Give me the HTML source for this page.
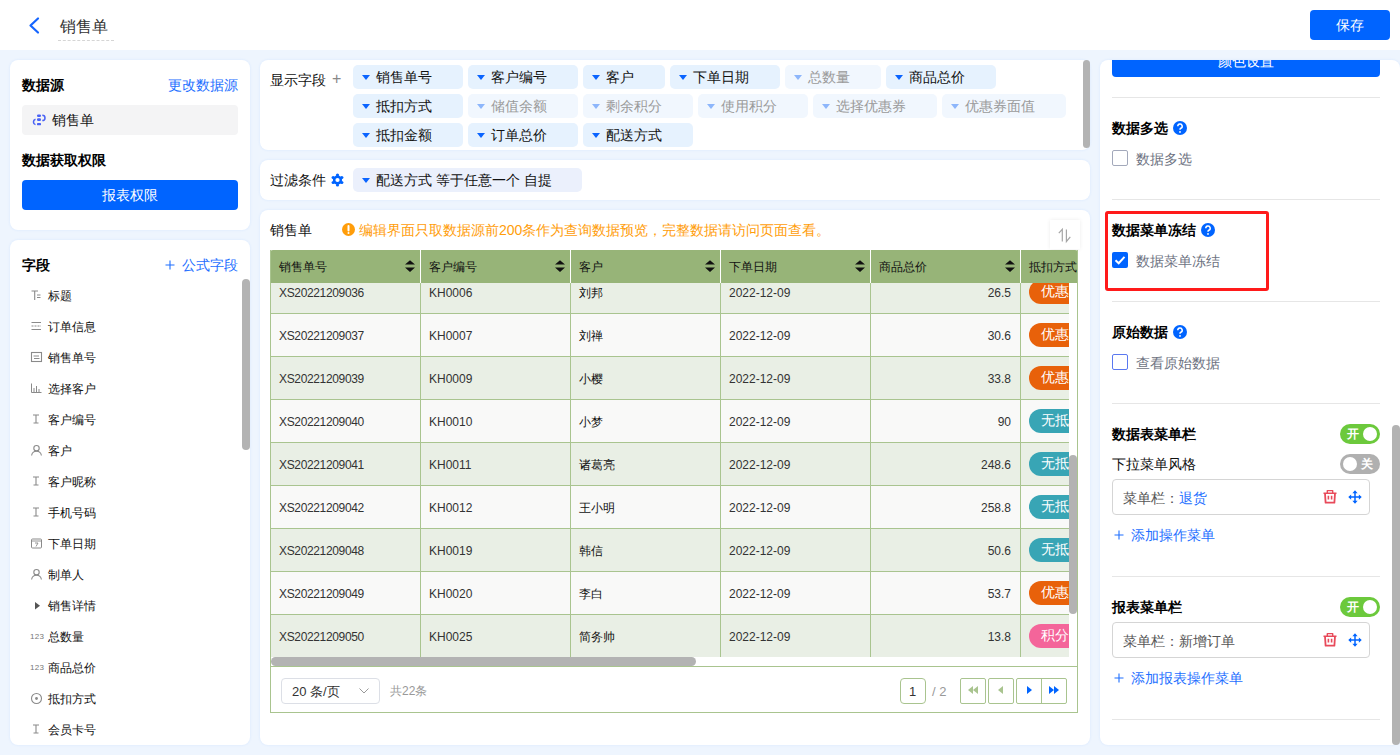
<!DOCTYPE html>
<html><head><meta charset="utf-8"><style>
*{box-sizing:border-box;margin:0;padding:0}
html,body{width:1400px;height:755px;overflow:hidden}
body{position:relative;background:#EEF5FE;font-family:"Liberation Sans",sans-serif;color:#333}
.a{position:absolute}
.t{position:absolute;white-space:nowrap;line-height:1}
.panel{position:absolute;background:#fff;border-radius:8px;overflow:hidden;box-shadow:0 0 3px rgba(30,120,255,0.10)}
svg{position:absolute;overflow:visible}
</style></head><body>
<div class="a" style="left:0px;top:0px;width:1400px;height:50px;background:#fff"></div>
<svg style="left:27px;top:16px" width="14" height="19" viewBox="0 0 14 19"><path d="M11 2.5 L3.5 9.5 L11 16.5" fill="none" stroke="#1565FF" stroke-width="2.2" stroke-linecap="round" stroke-linejoin="round"/></svg>
<div class="t" style="left:60px;top:19px;font-size:16px;color:#333;">销售单</div>
<div class="a" style="left:58px;top:40px;width:56px;height:0px;border-top:1px dashed #D5D5D5"></div>
<div class="a" style="left:1310px;top:10px;width:80px;height:30px;background:#0064FF;border-radius:4px"></div>
<div class="t" style="left:1336px;top:18px;font-size:14px;color:#fff;">保存</div>
<div class="panel" style="left:10px;top:60px;width:240px;height:170px"></div>
<div class="t" style="left:22px;top:78px;font-size:14px;color:#000;font-weight:bold">数据源</div>
<div class="t" style="left:168px;top:78px;font-size:14px;color:#1E6FFF;">更改数据源</div>
<div class="a" style="left:22px;top:105px;width:216px;height:30px;background:#F4F4F5;border-radius:4px"></div>
<svg style="left:28px;top:108px" width="24" height="24" viewBox="0 0 24 24"><g fill="#4A63F5"><rect x="9" y="6.4" width="4" height="2.6" rx="1.2"/><rect x="9" y="10.3" width="4" height="2.6" rx="1.2"/><rect x="9" y="15" width="4" height="2.2" rx="0.4"/></g><path d="M14.3 7.2 A2.7 2.7 0 0 1 14.3 12.6" fill="none" stroke="#4A63F5" stroke-width="1.5"/><path d="M7.5 11.2 A2.8 2.8 0 0 0 7.5 16.6" fill="none" stroke="#4A63F5" stroke-width="1.5"/></svg>
<div class="t" style="left:52px;top:113px;font-size:14px;color:#111;">销售单</div>
<div class="t" style="left:22px;top:153px;font-size:14px;color:#000;font-weight:bold">数据获取权限</div>
<div class="a" style="left:22px;top:180px;width:216px;height:30px;background:#0064FF;border-radius:4px"></div>
<div class="t" style="left:102px;top:188px;font-size:14px;color:#fff;">报表权限</div>
<div class="panel" style="left:10px;top:240px;width:240px;height:505px"></div>
<div class="t" style="left:22px;top:258px;font-size:14px;color:#000;font-weight:bold">字段</div>
<svg style="left:165px;top:260px" width="10" height="10" viewBox="0 0 10 10"><path d="M5 0.5 V9.5 M0.5 5 H9.5" stroke="#1E6FFF" stroke-width="1.1"/></svg>
<div class="t" style="left:182px;top:258px;font-size:14px;color:#1E6FFF;">公式字段</div>
<div class="t" style="left:48px;top:290px;font-size:12px;color:#111;">标题</div>
<svg style="left:31px;top:290px" width="11" height="11" viewBox="0 0 11 11"><path d="M0.5 1 H7 M3.7 1 V10" stroke="#8A8A8A" stroke-width="1.1" fill="none"/><path d="M6 5 H9.5 M6 7.5 H9.5" stroke="#8A8A8A" stroke-width="1" fill="none"/></svg>
<div class="t" style="left:48px;top:321px;font-size:12px;color:#111;">订单信息</div>
<svg style="left:31px;top:321px" width="11" height="11" viewBox="0 0 11 11"><path d="M0.5 1.5 H10 M0.5 8.5 H10" stroke="#8A8A8A" stroke-width="1.1" fill="none"/><path d="M0.5 5 H10" stroke="#8A8A8A" stroke-width="1" stroke-dasharray="2 1" fill="none"/></svg>
<div class="t" style="left:48px;top:352px;font-size:12px;color:#111;">销售单号</div>
<svg style="left:31px;top:352px" width="11" height="11" viewBox="0 0 11 11"><rect x="0.5" y="0.5" width="10" height="9" stroke="#8A8A8A" stroke-width="1.1" fill="none"/><path d="M2.5 4 H8 M3 6.5 H8.5" stroke="#8A8A8A" stroke-width="1" fill="none"/></svg>
<div class="t" style="left:48px;top:383px;font-size:12px;color:#111;">选择客户</div>
<svg style="left:31px;top:383px" width="11" height="11" viewBox="0 0 11 11"><path d="M0.5 0.5 V9.5 H10.5 M3 9 V5 M5.5 9 V3 M8 9 V6" stroke="#8A8A8A" stroke-width="1" fill="none"/></svg>
<div class="t" style="left:48px;top:414px;font-size:12px;color:#111;">客户编号</div>
<svg style="left:32px;top:414px" width="8" height="10" viewBox="0 0 8 10"><path d="M1 1 H7 M4 1 V9 M1.5 9 H6.5" stroke="#8A8A8A" stroke-width="1.1" fill="none"/></svg>
<div class="t" style="left:48px;top:445px;font-size:12px;color:#111;">客户</div>
<svg style="left:31px;top:445px" width="11" height="11" viewBox="0 0 11 11"><circle cx="5.5" cy="3.2" r="2.7" stroke="#8A8A8A" stroke-width="1.1" fill="none"/><path d="M0.6 10.5 C1 7.5 3 6.3 5.5 6.3 C8 6.3 10 7.5 10.4 10.5" stroke="#8A8A8A" stroke-width="1.1" fill="none"/></svg>
<div class="t" style="left:48px;top:476px;font-size:12px;color:#111;">客户昵称</div>
<svg style="left:32px;top:476px" width="8" height="10" viewBox="0 0 8 10"><path d="M1 1 H7 M4 1 V9 M1.5 9 H6.5" stroke="#8A8A8A" stroke-width="1.1" fill="none"/></svg>
<div class="t" style="left:48px;top:507px;font-size:12px;color:#111;">手机号码</div>
<svg style="left:32px;top:507px" width="8" height="10" viewBox="0 0 8 10"><path d="M1 1 H7 M4 1 V9 M1.5 9 H6.5" stroke="#8A8A8A" stroke-width="1.1" fill="none"/></svg>
<div class="t" style="left:48px;top:538px;font-size:12px;color:#111;">下单日期</div>
<svg style="left:31px;top:538px" width="11" height="11" viewBox="0 0 11 11"><rect x="0.5" y="1" width="10" height="9" rx="1" stroke="#8A8A8A" stroke-width="1" fill="none"/><path d="M0.5 3 H10.5 M4 5 H7 L5 8.5" stroke="#8A8A8A" stroke-width="0.9" fill="none"/></svg>
<div class="t" style="left:48px;top:569px;font-size:12px;color:#111;">制单人</div>
<svg style="left:31px;top:569px" width="11" height="11" viewBox="0 0 11 11"><circle cx="5.5" cy="3.2" r="2.7" stroke="#8A8A8A" stroke-width="1.1" fill="none"/><path d="M0.6 10.5 C1 7.5 3 6.3 5.5 6.3 C8 6.3 10 7.5 10.4 10.5" stroke="#8A8A8A" stroke-width="1.1" fill="none"/></svg>
<div class="t" style="left:48px;top:600px;font-size:12px;color:#111;">销售详情</div>
<svg style="left:35px;top:602px" width="5" height="8" viewBox="0 0 5 8"><path d="M0 0 L5 3.8 L0 7.6 Z" fill="#555"/></svg>
<div class="t" style="left:48px;top:631px;font-size:12px;color:#111;">总数量</div>
<div class="t" style="left:30px;top:633px;font-size:8px;color:#777;letter-spacing:0.3px">123</div>
<div class="t" style="left:48px;top:662px;font-size:12px;color:#111;">商品总价</div>
<div class="t" style="left:30px;top:664px;font-size:8px;color:#777;letter-spacing:0.3px">123</div>
<div class="t" style="left:48px;top:693px;font-size:12px;color:#111;">抵扣方式</div>
<svg style="left:31px;top:693px" width="11" height="11" viewBox="0 0 11 11"><circle cx="5.5" cy="5.5" r="5" stroke="#8A8A8A" stroke-width="1.1" fill="none"/><circle cx="5.5" cy="5.5" r="1.4" fill="#8A8A8A"/></svg>
<div class="t" style="left:48px;top:724px;font-size:12px;color:#111;">会员卡号</div>
<svg style="left:32px;top:724px" width="8" height="10" viewBox="0 0 8 10"><path d="M1 1 H7 M4 1 V9 M1.5 9 H6.5" stroke="#8A8A8A" stroke-width="1.1" fill="none"/></svg>
<div class="a" style="left:242px;top:279px;width:8px;height:171px;background:#B3B3B3;border-radius:4px"></div>
<div class="panel" style="left:260px;top:60px;width:830px;height:90px"></div>
<div class="t" style="left:270px;top:73px;font-size:14px;color:#111;">显示字段</div>
<div class="t" style="left:332px;top:71px;font-size:16px;color:#888;">+</div>
<div class="a" style="left:353px;top:65px;width:110px;height:24px;background:#E6F2FE;border-radius:5px"></div>
<svg style="left:362px;top:75px" width="8" height="5" viewBox="0 0 8 5"><path d="M0 0 H8 L4 5 Z" fill="#0A64FF"/></svg>
<div class="t" style="left:376px;top:70px;font-size:14px;color:#111;">销售单号</div>
<div class="a" style="left:468px;top:65px;width:110px;height:24px;background:#E6F2FE;border-radius:5px"></div>
<svg style="left:477px;top:75px" width="8" height="5" viewBox="0 0 8 5"><path d="M0 0 H8 L4 5 Z" fill="#0A64FF"/></svg>
<div class="t" style="left:491px;top:70px;font-size:14px;color:#111;">客户编号</div>
<div class="a" style="left:583px;top:65px;width:82px;height:24px;background:#E6F2FE;border-radius:5px"></div>
<svg style="left:592px;top:75px" width="8" height="5" viewBox="0 0 8 5"><path d="M0 0 H8 L4 5 Z" fill="#0A64FF"/></svg>
<div class="t" style="left:606px;top:70px;font-size:14px;color:#111;">客户</div>
<div class="a" style="left:670px;top:65px;width:110px;height:24px;background:#E6F2FE;border-radius:5px"></div>
<svg style="left:679px;top:75px" width="8" height="5" viewBox="0 0 8 5"><path d="M0 0 H8 L4 5 Z" fill="#0A64FF"/></svg>
<div class="t" style="left:693px;top:70px;font-size:14px;color:#111;">下单日期</div>
<div class="a" style="left:785px;top:65px;width:96px;height:24px;background:#F1F7FE;border-radius:5px"></div>
<svg style="left:794px;top:75px" width="8" height="5" viewBox="0 0 8 5"><path d="M0 0 H8 L4 5 Z" fill="#8DB6FB"/></svg>
<div class="t" style="left:808px;top:70px;font-size:14px;color:#9A9A9A;">总数量</div>
<div class="a" style="left:886px;top:65px;width:110px;height:24px;background:#E6F2FE;border-radius:5px"></div>
<svg style="left:895px;top:75px" width="8" height="5" viewBox="0 0 8 5"><path d="M0 0 H8 L4 5 Z" fill="#0A64FF"/></svg>
<div class="t" style="left:909px;top:70px;font-size:14px;color:#111;">商品总价</div>
<div class="a" style="left:353px;top:94px;width:110px;height:24px;background:#E6F2FE;border-radius:5px"></div>
<svg style="left:362px;top:104px" width="8" height="5" viewBox="0 0 8 5"><path d="M0 0 H8 L4 5 Z" fill="#0A64FF"/></svg>
<div class="t" style="left:376px;top:99px;font-size:14px;color:#111;">抵扣方式</div>
<div class="a" style="left:468px;top:94px;width:110px;height:24px;background:#F1F7FE;border-radius:5px"></div>
<svg style="left:477px;top:104px" width="8" height="5" viewBox="0 0 8 5"><path d="M0 0 H8 L4 5 Z" fill="#8DB6FB"/></svg>
<div class="t" style="left:491px;top:99px;font-size:14px;color:#9A9A9A;">储值余额</div>
<div class="a" style="left:583px;top:94px;width:110px;height:24px;background:#F1F7FE;border-radius:5px"></div>
<svg style="left:592px;top:104px" width="8" height="5" viewBox="0 0 8 5"><path d="M0 0 H8 L4 5 Z" fill="#8DB6FB"/></svg>
<div class="t" style="left:606px;top:99px;font-size:14px;color:#9A9A9A;">剩余积分</div>
<div class="a" style="left:698px;top:94px;width:110px;height:24px;background:#F1F7FE;border-radius:5px"></div>
<svg style="left:707px;top:104px" width="8" height="5" viewBox="0 0 8 5"><path d="M0 0 H8 L4 5 Z" fill="#8DB6FB"/></svg>
<div class="t" style="left:721px;top:99px;font-size:14px;color:#9A9A9A;">使用积分</div>
<div class="a" style="left:813px;top:94px;width:124px;height:24px;background:#F1F7FE;border-radius:5px"></div>
<svg style="left:822px;top:104px" width="8" height="5" viewBox="0 0 8 5"><path d="M0 0 H8 L4 5 Z" fill="#8DB6FB"/></svg>
<div class="t" style="left:836px;top:99px;font-size:14px;color:#9A9A9A;">选择优惠券</div>
<div class="a" style="left:942px;top:94px;width:124px;height:24px;background:#F1F7FE;border-radius:5px"></div>
<svg style="left:951px;top:104px" width="8" height="5" viewBox="0 0 8 5"><path d="M0 0 H8 L4 5 Z" fill="#8DB6FB"/></svg>
<div class="t" style="left:965px;top:99px;font-size:14px;color:#9A9A9A;">优惠券面值</div>
<div class="a" style="left:353px;top:123px;width:110px;height:24px;background:#E6F2FE;border-radius:5px"></div>
<svg style="left:362px;top:133px" width="8" height="5" viewBox="0 0 8 5"><path d="M0 0 H8 L4 5 Z" fill="#0A64FF"/></svg>
<div class="t" style="left:376px;top:128px;font-size:14px;color:#111;">抵扣金额</div>
<div class="a" style="left:468px;top:123px;width:110px;height:24px;background:#E6F2FE;border-radius:5px"></div>
<svg style="left:477px;top:133px" width="8" height="5" viewBox="0 0 8 5"><path d="M0 0 H8 L4 5 Z" fill="#0A64FF"/></svg>
<div class="t" style="left:491px;top:128px;font-size:14px;color:#111;">订单总价</div>
<div class="a" style="left:583px;top:123px;width:110px;height:24px;background:#E6F2FE;border-radius:5px"></div>
<svg style="left:592px;top:133px" width="8" height="5" viewBox="0 0 8 5"><path d="M0 0 H8 L4 5 Z" fill="#0A64FF"/></svg>
<div class="t" style="left:606px;top:128px;font-size:14px;color:#111;">配送方式</div>
<div class="a" style="left:1083px;top:60px;width:7px;height:88px;background:#B3B3B3;border-radius:4px"></div>
<div class="panel" style="left:260px;top:160px;width:830px;height:40px"></div>
<div class="t" style="left:270px;top:173px;font-size:14px;color:#111;">过滤条件</div>
<svg style="left:331px;top:174px" width="13" height="12" viewBox="0 0 13 12"><g transform="translate(6.5 6)" fill="#0064FF"><circle r="4.6"/><circle cx="4.33" cy="2.50" r="1.6"/><circle cx="-0.00" cy="5.00" r="1.6"/><circle cx="-4.33" cy="2.50" r="1.6"/><circle cx="-4.33" cy="-2.50" r="1.6"/><circle cx="0.00" cy="-5.00" r="1.6"/><circle cx="4.33" cy="-2.50" r="1.6"/><circle r="2.1" fill="#fff"/></g></svg>
<div class="a" style="left:353px;top:168px;width:229px;height:24px;background:#EBF0FC;border-radius:5px"></div>
<svg style="left:362px;top:178px" width="8" height="5" viewBox="0 0 8 5"><path d="M0 0 H8 L4 5 Z" fill="#0A64FF"/></svg>
<div class="t" style="left:376px;top:173px;font-size:14px;color:#111;">配送方式 等于任意一个 自提</div>
<div class="panel" style="left:260px;top:210px;width:830px;height:535px"></div>
<div class="t" style="left:270px;top:223px;font-size:14px;color:#111;">销售单</div>
<svg style="left:342px;top:223px" width="13" height="13" viewBox="0 0 13 13"><circle cx="6.5" cy="6.5" r="6.5" fill="#FF9D0A"/><path d="M6.5 3 V7.5" stroke="#fff" stroke-width="2" stroke-linecap="round"/><circle cx="6.5" cy="10" r="1" fill="#fff"/></svg>
<div class="t" style="left:359px;top:223px;font-size:14px;color:#FF9D0A;">编辑界面只取数据源前200条作为查询数据预览，完整数据请访问页面查看。</div>
<div class="a" style="left:1050px;top:220px;width:30px;height:29px;background:#fff;box-shadow:0 0 4px rgba(0,0,0,0.08)"></div>
<svg style="left:1057px;top:228px" width="16" height="15" viewBox="0 0 16 15"><path d="M1.8 5.2 L5.3 1.4 V13.5" fill="none" stroke="#A6A6A6" stroke-width="1.2"/><path d="M9.4 1.4 V13.5 L13.3 8.8" fill="none" stroke="#A6A6A6" stroke-width="1.2"/></svg>
<div class="a" style="left:270px;top:250px;width:808px;height:33px;background:#97B478;border-radius:3px 3px 0 0"></div>
<div class="t" style="left:279px;top:261px;font-size:12px;color:#111;">销售单号</div>
<svg style="left:405px;top:260px" width="10" height="12" viewBox="0 0 10 12"><path d="M0 4.6 L5 0.2 L10 4.6 Z M0 7.6 L5 12 L10 7.6 Z" fill="#111"/></svg>
<div class="t" style="left:429px;top:261px;font-size:12px;color:#111;">客户编号</div>
<div class="a" style="left:420px;top:250px;width:1px;height:33px;background:#fff"></div>
<svg style="left:555px;top:260px" width="10" height="12" viewBox="0 0 10 12"><path d="M0 4.6 L5 0.2 L10 4.6 Z M0 7.6 L5 12 L10 7.6 Z" fill="#111"/></svg>
<div class="t" style="left:579px;top:261px;font-size:12px;color:#111;">客户</div>
<div class="a" style="left:570px;top:250px;width:1px;height:33px;background:#fff"></div>
<svg style="left:705px;top:260px" width="10" height="12" viewBox="0 0 10 12"><path d="M0 4.6 L5 0.2 L10 4.6 Z M0 7.6 L5 12 L10 7.6 Z" fill="#111"/></svg>
<div class="t" style="left:729px;top:261px;font-size:12px;color:#111;">下单日期</div>
<div class="a" style="left:720px;top:250px;width:1px;height:33px;background:#fff"></div>
<svg style="left:855px;top:260px" width="10" height="12" viewBox="0 0 10 12"><path d="M0 4.6 L5 0.2 L10 4.6 Z M0 7.6 L5 12 L10 7.6 Z" fill="#111"/></svg>
<div class="t" style="left:879px;top:261px;font-size:12px;color:#111;">商品总价</div>
<div class="a" style="left:870px;top:250px;width:1px;height:33px;background:#fff"></div>
<svg style="left:1005px;top:260px" width="10" height="12" viewBox="0 0 10 12"><path d="M0 4.6 L5 0.2 L10 4.6 Z M0 7.6 L5 12 L10 7.6 Z" fill="#111"/></svg>
<div class="t" style="left:1029px;top:261px;font-size:12px;color:#111;">抵扣方式</div>
<div class="a" style="left:1020px;top:250px;width:1px;height:33px;background:#fff"></div>
<div class="a" style="left:270px;top:283px;width:799px;height:374px;overflow:hidden">
<div class="a" style="left:0;top:-12px;width:900px;height:43px;background:#E9EFE5;border-bottom:1px solid #A9C48F"></div>
<div class="t" style="left:9px;top:4px;font-size:12px;color:#333;letter-spacing:-0.35px">XS20221209036</div>
<div class="t" style="left:159px;top:4px;font-size:12px;color:#333">KH0006</div>
<div class="t" style="left:309px;top:4px;font-size:12px;color:#111">刘邦</div>
<div class="t" style="left:459px;top:4px;font-size:12px;color:#333">2022-12-09</div>
<div class="t" style="right:58px;top:4px;font-size:12px;color:#333">26.5</div>
<div class="a" style="left:759px;top:-3px;width:80px;height:24px;border-radius:12px;background:#E8610A"></div>
<div class="t" style="left:771px;top:1px;font-size:14px;color:#fff">优惠券</div>
<div class="a" style="left:0;top:31px;width:900px;height:43px;background:#F9F9F8;border-bottom:1px solid #A9C48F"></div>
<div class="t" style="left:9px;top:47px;font-size:12px;color:#333;letter-spacing:-0.35px">XS20221209037</div>
<div class="t" style="left:159px;top:47px;font-size:12px;color:#333">KH0007</div>
<div class="t" style="left:309px;top:47px;font-size:12px;color:#111">刘禅</div>
<div class="t" style="left:459px;top:47px;font-size:12px;color:#333">2022-12-09</div>
<div class="t" style="right:58px;top:47px;font-size:12px;color:#333">30.6</div>
<div class="a" style="left:759px;top:40px;width:80px;height:24px;border-radius:12px;background:#E8610A"></div>
<div class="t" style="left:771px;top:44px;font-size:14px;color:#fff">优惠券</div>
<div class="a" style="left:0;top:74px;width:900px;height:43px;background:#E9EFE5;border-bottom:1px solid #A9C48F"></div>
<div class="t" style="left:9px;top:90px;font-size:12px;color:#333;letter-spacing:-0.35px">XS20221209039</div>
<div class="t" style="left:159px;top:90px;font-size:12px;color:#333">KH0009</div>
<div class="t" style="left:309px;top:90px;font-size:12px;color:#111">小樱</div>
<div class="t" style="left:459px;top:90px;font-size:12px;color:#333">2022-12-09</div>
<div class="t" style="right:58px;top:90px;font-size:12px;color:#333">33.8</div>
<div class="a" style="left:759px;top:83px;width:80px;height:24px;border-radius:12px;background:#E8610A"></div>
<div class="t" style="left:771px;top:87px;font-size:14px;color:#fff">优惠券</div>
<div class="a" style="left:0;top:117px;width:900px;height:43px;background:#F9F9F8;border-bottom:1px solid #A9C48F"></div>
<div class="t" style="left:9px;top:133px;font-size:12px;color:#333;letter-spacing:-0.35px">XS20221209040</div>
<div class="t" style="left:159px;top:133px;font-size:12px;color:#333">KH0010</div>
<div class="t" style="left:309px;top:133px;font-size:12px;color:#111">小梦</div>
<div class="t" style="left:459px;top:133px;font-size:12px;color:#333">2022-12-09</div>
<div class="t" style="right:58px;top:133px;font-size:12px;color:#333">90</div>
<div class="a" style="left:759px;top:126px;width:80px;height:24px;border-radius:12px;background:#38A5B5"></div>
<div class="t" style="left:771px;top:130px;font-size:14px;color:#fff">无抵扣</div>
<div class="a" style="left:0;top:160px;width:900px;height:43px;background:#E9EFE5;border-bottom:1px solid #A9C48F"></div>
<div class="t" style="left:9px;top:176px;font-size:12px;color:#333;letter-spacing:-0.35px">XS20221209041</div>
<div class="t" style="left:159px;top:176px;font-size:12px;color:#333">KH0011</div>
<div class="t" style="left:309px;top:176px;font-size:12px;color:#111">诸葛亮</div>
<div class="t" style="left:459px;top:176px;font-size:12px;color:#333">2022-12-09</div>
<div class="t" style="right:58px;top:176px;font-size:12px;color:#333">248.6</div>
<div class="a" style="left:759px;top:169px;width:80px;height:24px;border-radius:12px;background:#38A5B5"></div>
<div class="t" style="left:771px;top:173px;font-size:14px;color:#fff">无抵扣</div>
<div class="a" style="left:0;top:203px;width:900px;height:43px;background:#F9F9F8;border-bottom:1px solid #A9C48F"></div>
<div class="t" style="left:9px;top:219px;font-size:12px;color:#333;letter-spacing:-0.35px">XS20221209042</div>
<div class="t" style="left:159px;top:219px;font-size:12px;color:#333">KH0012</div>
<div class="t" style="left:309px;top:219px;font-size:12px;color:#111">王小明</div>
<div class="t" style="left:459px;top:219px;font-size:12px;color:#333">2022-12-09</div>
<div class="t" style="right:58px;top:219px;font-size:12px;color:#333">258.8</div>
<div class="a" style="left:759px;top:212px;width:80px;height:24px;border-radius:12px;background:#38A5B5"></div>
<div class="t" style="left:771px;top:216px;font-size:14px;color:#fff">无抵扣</div>
<div class="a" style="left:0;top:246px;width:900px;height:43px;background:#E9EFE5;border-bottom:1px solid #A9C48F"></div>
<div class="t" style="left:9px;top:262px;font-size:12px;color:#333;letter-spacing:-0.35px">XS20221209048</div>
<div class="t" style="left:159px;top:262px;font-size:12px;color:#333">KH0019</div>
<div class="t" style="left:309px;top:262px;font-size:12px;color:#111">韩信</div>
<div class="t" style="left:459px;top:262px;font-size:12px;color:#333">2022-12-09</div>
<div class="t" style="right:58px;top:262px;font-size:12px;color:#333">50.6</div>
<div class="a" style="left:759px;top:255px;width:80px;height:24px;border-radius:12px;background:#38A5B5"></div>
<div class="t" style="left:771px;top:259px;font-size:14px;color:#fff">无抵扣</div>
<div class="a" style="left:0;top:289px;width:900px;height:43px;background:#F9F9F8;border-bottom:1px solid #A9C48F"></div>
<div class="t" style="left:9px;top:305px;font-size:12px;color:#333;letter-spacing:-0.35px">XS20221209049</div>
<div class="t" style="left:159px;top:305px;font-size:12px;color:#333">KH0020</div>
<div class="t" style="left:309px;top:305px;font-size:12px;color:#111">李白</div>
<div class="t" style="left:459px;top:305px;font-size:12px;color:#333">2022-12-09</div>
<div class="t" style="right:58px;top:305px;font-size:12px;color:#333">53.7</div>
<div class="a" style="left:759px;top:298px;width:80px;height:24px;border-radius:12px;background:#E8610A"></div>
<div class="t" style="left:771px;top:302px;font-size:14px;color:#fff">优惠券</div>
<div class="a" style="left:0;top:332px;width:900px;height:43px;background:#E9EFE5;border-bottom:1px solid #A9C48F"></div>
<div class="t" style="left:9px;top:348px;font-size:12px;color:#333;letter-spacing:-0.35px">XS20221209050</div>
<div class="t" style="left:159px;top:348px;font-size:12px;color:#333">KH0025</div>
<div class="t" style="left:309px;top:348px;font-size:12px;color:#111">简务帅</div>
<div class="t" style="left:459px;top:348px;font-size:12px;color:#333">2022-12-09</div>
<div class="t" style="right:58px;top:348px;font-size:12px;color:#333">13.8</div>
<div class="a" style="left:759px;top:341px;width:80px;height:24px;border-radius:12px;background:#F4659A"></div>
<div class="t" style="left:771px;top:345px;font-size:14px;color:#fff">积分</div>
<div class="a" style="left:150px;top:0;width:1px;height:374px;background:#A9C48F"></div>
<div class="a" style="left:300px;top:0;width:1px;height:374px;background:#A9C48F"></div>
<div class="a" style="left:450px;top:0;width:1px;height:374px;background:#A9C48F"></div>
<div class="a" style="left:600px;top:0;width:1px;height:374px;background:#A9C48F"></div>
<div class="a" style="left:750px;top:0;width:1px;height:374px;background:#A9C48F"></div>
</div>
<div class="a" style="left:270px;top:250px;width:1px;height:462px;background:#A9C48F"></div>
<div class="a" style="left:1077px;top:250px;width:1px;height:462px;background:#A9C48F"></div>
<div class="a" style="left:270px;top:666px;width:808px;height:1px;background:#A9C48F"></div>
<div class="a" style="left:270px;top:712px;width:808px;height:1px;background:#A9C48F"></div>
<div class="a" style="left:271px;top:657px;width:425px;height:9px;background:#B3B3B3;border-radius:4.5px"></div>
<div class="a" style="left:1069px;top:455px;width:8px;height:159px;background:#B3B3B3;border-radius:4px"></div>
<div class="a" style="left:281px;top:678px;width:99px;height:26px;border:1px solid #DCDFE6;border-radius:4px;background:#fff"></div>
<div class="t" style="left:292px;top:685px;font-size:13px;color:#333;">20 条/页</div>
<svg style="left:359px;top:688px" width="10" height="6" viewBox="0 0 10 6"><path d="M0.5 0.5 L5 5 L9.5 0.5" fill="none" stroke="#999" stroke-width="1"/></svg>
<div class="t" style="left:390px;top:685px;font-size:12px;color:#999;">共22条</div>
<div class="a" style="left:900px;top:678px;width:26px;height:26px;border:1px solid #A9C48F;border-radius:4px;background:#fff"></div>
<div class="t" style="left:909px;top:685px;font-size:13px;color:#333;">1</div>
<div class="t" style="left:932px;top:685px;font-size:13px;color:#999;">/ 2</div>
<div class="a" style="left:960px;top:678px;width:26px;height:26px;border:1px solid #A9C48F;border-radius:2px"></div>
<div class="a" style="left:988px;top:678px;width:26px;height:26px;border:1px solid #A9C48F;border-radius:2px"></div>
<div class="a" style="left:1016px;top:678px;width:51px;height:26px;border:1px solid #A9C48F;border-radius:2px"></div>
<div class="a" style="left:1041px;top:678px;width:1px;height:26px;background:#A9C48F"></div>
<svg style="left:968px;top:686px" width="10" height="8" viewBox="0 0 10 8"><path d="M5 0 V8 L0 4 Z M10 0 V8 L5 4 Z" fill="#A9C48F"/></svg>
<svg style="left:998px;top:686px" width="5" height="8" viewBox="0 0 5 8"><path d="M5 0 V8 L0 4 Z" fill="#A9C48F"/></svg>
<svg style="left:1027px;top:686px" width="5" height="8" viewBox="0 0 5 8"><path d="M0 0 V8 L5 4 Z" fill="#0064FF"/></svg>
<svg style="left:1049px;top:686px" width="10" height="8" viewBox="0 0 10 8"><path d="M0 0 V8 L5 4 Z M5 0 V8 L10 4 Z" fill="#0064FF"/></svg>
<div class="panel" style="left:1100px;top:60px;width:300px;height:685px;border-radius:8px"></div>
<div class="a" style="left:1100px;top:60px;width:300px;height:685px;overflow:hidden;border-radius:8px">
<div class="a" style="left:12px;top:-33px;width:268px;height:50px;background:#0064FF;border-radius:4px"></div>
<div class="t" style="left:118px;top:-6px;font-size:14px;color:#fff">颜色设置</div>
</div>
<div class="a" style="left:1112px;top:97px;width:268px;height:1px;background:#E6E6E6"></div>
<div class="a" style="left:1112px;top:199px;width:268px;height:1px;background:#E6E6E6"></div>
<div class="a" style="left:1112px;top:301px;width:268px;height:1px;background:#E6E6E6"></div>
<div class="a" style="left:1112px;top:403px;width:268px;height:1px;background:#E6E6E6"></div>
<div class="a" style="left:1112px;top:576px;width:268px;height:1px;background:#E6E6E6"></div>
<div class="a" style="left:1112px;top:719px;width:268px;height:1px;background:#E6E6E6"></div>
<div class="t" style="left:1112px;top:121px;font-size:14px;color:#000;font-weight:bold">数据多选</div>
<svg style="left:1173px;top:121px" width="14" height="14" viewBox="0 0 14 14"><circle cx="7" cy="7" r="7" fill="#0064FF"/><path d="M4.8 5.3 A2.2 2.2 0 1 1 7.8 7.3 C7.1 7.6 7 8 7 8.8" fill="none" stroke="#fff" stroke-width="1.5"/><circle cx="7" cy="10.9" r="0.95" fill="#fff"/></svg>
<div class="a" style="left:1112px;top:150px;width:16px;height:16px;border:1px solid #A3A9BB;border-radius:2px;background:#fff"></div>
<div class="t" style="left:1136px;top:152px;font-size:14px;color:#6E7382;">数据多选</div>
<div class="t" style="left:1112px;top:223px;font-size:14px;color:#000;font-weight:bold">数据菜单冻结</div>
<svg style="left:1201px;top:223px" width="14" height="14" viewBox="0 0 14 14"><circle cx="7" cy="7" r="7" fill="#0064FF"/><path d="M4.8 5.3 A2.2 2.2 0 1 1 7.8 7.3 C7.1 7.6 7 8 7 8.8" fill="none" stroke="#fff" stroke-width="1.5"/><circle cx="7" cy="10.9" r="0.95" fill="#fff"/></svg>
<div class="a" style="left:1112px;top:252px;width:16px;height:16px;background:#0064FF;border-radius:2px"></div>
<svg style="left:1112px;top:252px" width="16" height="16" viewBox="0 0 16 16"><path d="M3.5 8.2 L6.7 11.2 L12.5 4.8" fill="none" stroke="#fff" stroke-width="2"/></svg>
<div class="t" style="left:1136px;top:254px;font-size:14px;color:#6E7382;">数据菜单冻结</div>
<div class="a" style="left:1105px;top:211px;width:164px;height:80px;border:3px solid #FF1A1A;border-radius:3px"></div>
<div class="t" style="left:1112px;top:325px;font-size:14px;color:#000;font-weight:bold">原始数据</div>
<svg style="left:1173px;top:325px" width="14" height="14" viewBox="0 0 14 14"><circle cx="7" cy="7" r="7" fill="#0064FF"/><path d="M4.8 5.3 A2.2 2.2 0 1 1 7.8 7.3 C7.1 7.6 7 8 7 8.8" fill="none" stroke="#fff" stroke-width="1.5"/><circle cx="7" cy="10.9" r="0.95" fill="#fff"/></svg>
<div class="a" style="left:1112px;top:354px;width:16px;height:16px;border:1px solid #5A78F0;border-radius:2px;background:#fff"></div>
<div class="t" style="left:1136px;top:356px;font-size:14px;color:#6E7382;">查看原始数据</div>
<div class="t" style="left:1112px;top:427px;font-size:14px;color:#000;font-weight:bold">数据表菜单栏</div>
<div class="a" style="left:1340px;top:424px;width:40px;height:20px;background:#6CC93C;border-radius:10px"></div>
<div class="a" style="left:1363px;top:427px;width:14px;height:14px;border-radius:7px;background:#fff"></div>
<div class="t" style="left:1347px;top:428px;font-size:12px;color:#fff;font-weight:bold">开</div>
<div class="t" style="left:1112px;top:457px;font-size:14px;color:#111;">下拉菜单风格</div>
<div class="a" style="left:1340px;top:454px;width:40px;height:20px;background:#B0B0B0;border-radius:10px"></div>
<div class="a" style="left:1343px;top:457px;width:14px;height:14px;border-radius:7px;background:#fff"></div>
<div class="t" style="left:1361px;top:458px;font-size:12px;color:#fff;font-weight:bold">关</div>
<div class="a" style="left:1112px;top:479px;width:258px;height:36px;border:1px solid #D5D5D5;border-radius:4px"></div>
<div class="t" style="left:1123px;top:491px;font-size:14px;color:#555;">菜单栏：<span style="color:#1E6FFF">退货</span></div>
<svg style="left:1322px;top:489px" width="16" height="16" viewBox="0 0 16 16"><path d="M1.5 4.2 H14.5 M5.3 4.2 V1.6 H10.7 V4.2" fill="none" stroke="#E84A5A" stroke-width="1.4" stroke-linejoin="round"/><path d="M3 4.2 L3.6 13.6 H12.4 L13 4.2" fill="none" stroke="#E84A5A" stroke-width="1.8" stroke-linejoin="round"/><path d="M6.4 6.8 V10.6 M9.6 6.8 V10.6" stroke="#E84A5A" stroke-width="1.6"/></svg>
<svg style="left:1348px;top:490px" width="14" height="14" viewBox="0 0 16 16"><path d="M8 2 V14 M2 8 H14" stroke="#0064FF" stroke-width="1.7"/><path d="M8 0.3 L11 3.6 H5 Z M8 15.7 L11 12.4 H5 Z M0.3 8 L3.6 5 V11 Z M15.7 8 L12.4 5 V11 Z" fill="#0064FF"/></svg>
<svg style="left:1114px;top:530px" width="10" height="10" viewBox="0 0 10 10"><path d="M5 0.5 V9.5 M0.5 5 H9.5" stroke="#1E6FFF" stroke-width="1.1"/></svg>
<div class="t" style="left:1131px;top:528px;font-size:14px;color:#1E6FFF;">添加操作菜单</div>
<div class="t" style="left:1112px;top:600px;font-size:14px;color:#000;font-weight:bold">报表菜单栏</div>
<div class="a" style="left:1340px;top:597px;width:40px;height:20px;background:#6CC93C;border-radius:10px"></div>
<div class="a" style="left:1363px;top:600px;width:14px;height:14px;border-radius:7px;background:#fff"></div>
<div class="t" style="left:1347px;top:601px;font-size:12px;color:#fff;font-weight:bold">开</div>
<div class="a" style="left:1112px;top:622px;width:258px;height:36px;border:1px solid #D5D5D5;border-radius:4px"></div>
<div class="t" style="left:1123px;top:634px;font-size:14px;color:#555;">菜单栏：新增订单</div>
<svg style="left:1322px;top:632px" width="16" height="16" viewBox="0 0 16 16"><path d="M1.5 4.2 H14.5 M5.3 4.2 V1.6 H10.7 V4.2" fill="none" stroke="#E84A5A" stroke-width="1.4" stroke-linejoin="round"/><path d="M3 4.2 L3.6 13.6 H12.4 L13 4.2" fill="none" stroke="#E84A5A" stroke-width="1.8" stroke-linejoin="round"/><path d="M6.4 6.8 V10.6 M9.6 6.8 V10.6" stroke="#E84A5A" stroke-width="1.6"/></svg>
<svg style="left:1348px;top:633px" width="14" height="14" viewBox="0 0 16 16"><path d="M8 2 V14 M2 8 H14" stroke="#0064FF" stroke-width="1.7"/><path d="M8 0.3 L11 3.6 H5 Z M8 15.7 L11 12.4 H5 Z M0.3 8 L3.6 5 V11 Z M15.7 8 L12.4 5 V11 Z" fill="#0064FF"/></svg>
<svg style="left:1114px;top:673px" width="10" height="10" viewBox="0 0 10 10"><path d="M5 0.5 V9.5 M0.5 5 H9.5" stroke="#1E6FFF" stroke-width="1.1"/></svg>
<div class="t" style="left:1131px;top:671px;font-size:14px;color:#1E6FFF;">添加报表操作菜单</div>
<div class="a" style="left:1392px;top:425px;width:8px;height:320px;background:#B3B3B3;border-radius:4px"></div>
</body></html>
